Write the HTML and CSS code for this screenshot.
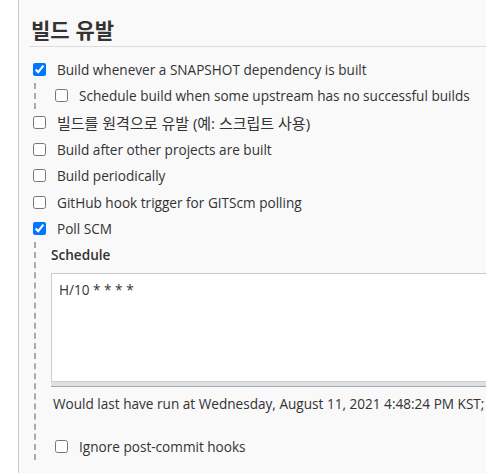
FILE: index.html
```html
<!DOCTYPE html>
<html lang="ko">
<head>
  <meta charset="UTF-8">
  <title>빌드 유발</title>
  <link rel="stylesheet" href="styles.css">
</head>
<body>
  <div class="page">
    <div class="side"></div>

    <div class="main">
      <div class="section-header">빌드 유발</div>

      <div class="row">
        <input type="checkbox" id="t1" checked>
        <label for="t1">Build whenever a SNAPSHOT dependency is built</label>
      </div>
      <div class="nested">
        <div class="row">
          <input type="checkbox" id="t1a">
          <label for="t1a">Schedule build when some upstream has no successful builds</label>
        </div>
      </div>

      <div class="row">
        <input type="checkbox" id="t2">
        <label for="t2" class="ko">빌드를 원격으로 유발 (예: 스크립트 사용)</label>
      </div>
      <div class="row">
        <input type="checkbox" id="t3">
        <label for="t3">Build after other projects are built</label>
      </div>
      <div class="row">
        <input type="checkbox" id="t4">
        <label for="t4">Build periodically</label>
      </div>
      <div class="row">
        <input type="checkbox" id="t5">
        <label for="t5">GitHub hook trigger for GITScm polling</label>
      </div>
      <div class="row">
        <input type="checkbox" id="t6" checked>
        <label for="t6">Poll SCM</label>
      </div>

      <div class="nested poll">
        <div class="field-label">Schedule</div>
        <textarea class="schedule">H/10 * * * *</textarea>
        <div class="textarea-handle"></div>
        <div class="info">Would last have run at Wednesday, August 11, 2021 4:48:24 PM KST; would next run at Wednesday, August 11, 2021 4:58:24 PM KST.</div>
        <div class="row ignore">
          <input type="checkbox" id="t6a">
          <label for="t6a">Ignore post-commit hooks</label>
        </div>
      </div>
    </div>
  </div>
</body>
</html>
```

FILE: styles.css
```css
html, body {
  margin: 0;
  height: 100%;
  overflow: hidden;
}

body {
  font-family: "Open Sans", "Noto Sans CJK KR", sans-serif;
  font-size: 13.6px;
  color: #333;
  background-color: #f9f9f9;
}

.page {
  display: flex;
  min-height: 100%;
}

.side {
  flex: 0 0 18px;
  background-color: #fff;
  border-right: 1px solid #ccc;
}

.main {
  flex: 0 0 800px;
  padding-left: 10px;
}

.section-header {
  font-family: "Noto Sans CJK KR", sans-serif;
  font-size: 21px;
  font-weight: bold;
  line-height: 24px;
  margin-top: 17px;
  padding: 0 0 5px 2px;
  border-bottom: 1px solid #ddd;
  margin-bottom: 9px;
}

.row {
  display: flex;
  align-items: center;
  height: 26.6px;
}

.row input[type="checkbox"] {
  width: 13px;
  height: 13px;
  margin: 0 3px 0 4px;
}

.row label {
  padding-left: 8px;
  white-space: nowrap;
}

.row .ko {
  font-size: 15px;
}

.nested {
  margin-left: 5px;
  border-left: 2px dashed #aaa;
  padding-left: 15px;
}

.poll {
  padding-top: 3px;
}

.field-label {
  font-weight: 600;
  line-height: 20px;
  margin-bottom: 8px;
}

.schedule {
  display: block;
  box-sizing: border-box;
  width: 100%;
  height: 108px;
  margin: 0;
  padding: 6px 7px;
  border: 1px solid #ccc;
  border-bottom: none;
  background-color: #fff;
  font-family: "Open Sans", sans-serif;
  font-size: 13.6px;
  line-height: 20px;
  color: #333;
  resize: none;
}

.textarea-handle {
  height: 4px;
  background-color: #dde1e4;
  border-top: 1px solid #ccc;
  border-bottom: 1px solid #9fa8b0;
}

.info {
  margin-top: 7px;
  line-height: 20px;
  padding-left: 2px;
  white-space: nowrap;
}

.ignore {
  margin-top: 19px;
}
```
